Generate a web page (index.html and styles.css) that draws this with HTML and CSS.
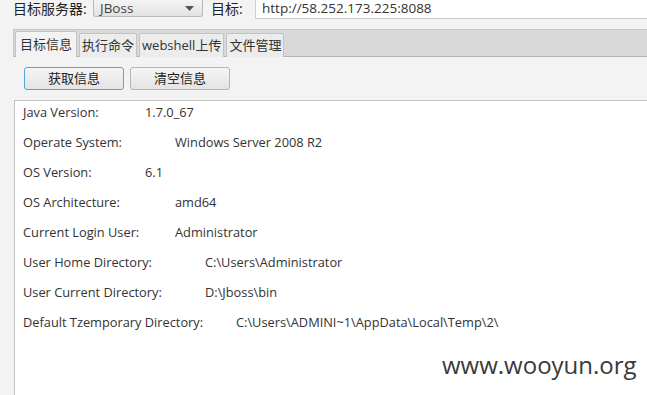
FILE: index.html
```html
<!DOCTYPE html>
<html>
<head>
    <title>JBoss</title>
    <link rel="stylesheet" href="styles.css">
</head>
<body>
    <div class="top">
        <span class="label">目标服务器:</span>
        <div class="combo">
            <span>JBoss</span>
            <svg width="9" height="5" viewBox="0 0 9 5"><path d="M0 0 L9 0 L4.5 5 Z" fill="#555"/></svg>
        </div>
        <span class="label target">目标:</span>
        <div class="field">http://58.252.173.225:8088</div>
    </div>

    <div class="tabs">
        <div class="tab active">目标信息</div>
        <div class="tab">执行命令</div>
        <div class="tab">webshell上传</div>
        <div class="tab">文件管理</div>
    </div>

    <div class="buttons">
        <div class="btn focus">获取信息</div>
        <div class="btn">清空信息</div>
    </div>

    <div class="panel">
        <div class="row"><span class="k w1">Java Version:</span><span>1.7.0_67</span></div>
        <div class="row"><span class="k w2">Operate System:</span><span>Windows Server 2008 R2</span></div>
        <div class="row"><span class="k w1">OS Version:</span><span>6.1</span></div>
        <div class="row"><span class="k w2">OS Architecture:</span><span>amd64</span></div>
        <div class="row"><span class="k w2">Current Login User:</span><span>Administrator</span></div>
        <div class="row"><span class="k w3">User Home Directory:</span><span>C:\Users\Administrator</span></div>
        <div class="row"><span class="k w3">User Current Directory:</span><span>D:\Jboss\bin</span></div>
        <div class="row"><span class="k w4">Default Tzemporary Directory:</span><span>C:\Users\ADMINI~1\AppData\Local\Temp\2\</span></div>
        <div class="mark">www.wooyun.org</div>
    </div>
</body>
</html>
```

FILE: styles.css
```css
body {
    margin: 0;
    background: #f3f3f3;
    font-family: "Open Sans", "Noto Sans CJK SC", sans-serif;
    color: #333;
    overflow: hidden;
}
.top {
    display: flex;
    align-items: flex-start;
    height: 19px;
}
.label {
    font-size: 14px;
    line-height: 17px;
    padding-left: 13px;
    width: 80px;
    color: #222;
}
.label.target {
    padding-left: 1px;
    width: 44px;
}
.combo {
    width: 110px;
    height: 17px;
    border: 1px solid #b9b9b9;
    border-top: none;
    border-radius: 0 0 3px 3px;
    background: linear-gradient(#f4f4f4, #e2e2e2);
    display: flex;
    align-items: center;
    justify-content: space-between;
    padding: 0 8px 0 6px;
    box-sizing: border-box;
    font-size: 13.5px;
    color: #444;
    margin-right: 7px;
}
.field {
    flex: 1;
    height: 18px;
    background: #fff;
    border-bottom: 1px solid #c9c9c9;
    border-left: 1px solid #d0d0d0;
    font-size: 13.5px;
    line-height: 17px;
    padding-left: 6px;
    color: #333;
}
.tabs {
    margin: 10px 0 0 13px;
    height: 28px;
    background: #d9d9d9;
    border-top: 1px solid #c6c6c6;
    border-left: 1px solid #c6c6c6;
    border-bottom: 1px solid #b3b3b3;
    display: flex;
    align-items: flex-end;
    gap: 2px;
    padding-left: 1px;
    box-sizing: border-box;
}
.tab {
    height: 23px;
    padding: 0 2px;
    border: 1px solid #c3c3c3;
    border-bottom: none;
    border-radius: 2px 2px 0 0;
    background: #ececec;
    font-size: 13px;
    line-height: 23px;
    color: #333;
    margin-bottom: -1px;
}
.tab.active {
    background: #f3f3f3;
    height: 25px;
    line-height: 25px;
    padding: 0 4px;
}
.buttons {
    display: flex;
    gap: 6px;
    margin: 10px 0 0 24px;
}
.btn {
    width: 100px;
    height: 23px;
    box-sizing: border-box;
    border: 1px solid #b5b5b5;
    border-radius: 3px;
    background: linear-gradient(#f5f5f5, #e4e4e4);
    font-size: 13px;
    line-height: 21px;
    text-align: center;
    color: #222;
}
.btn.focus {
    border-color: #4ea7d8;
}
.panel {
    position: relative;
    margin: 10px 0 0 14px;
    height: 300px;
    background: #fff;
    border-top: 1px solid #c5c5c5;
    border-left: 1px solid #c5c5c5;
    padding: 3px 0 0 8px;
}
.row {
    display: flex;
    height: 30px;
    line-height: 17px;
    font-size: 12.8px;
}
.k {
    flex: none;
}
.w1 { width: 122px; }
.w2 { width: 152px; }
.w3 { width: 182px; }
.w4 { width: 213px; }
.mark {
    position: absolute;
    left: 427px;
    top: 247px;
    font-size: 24px;
    color: #3a3a3a;
}
```
